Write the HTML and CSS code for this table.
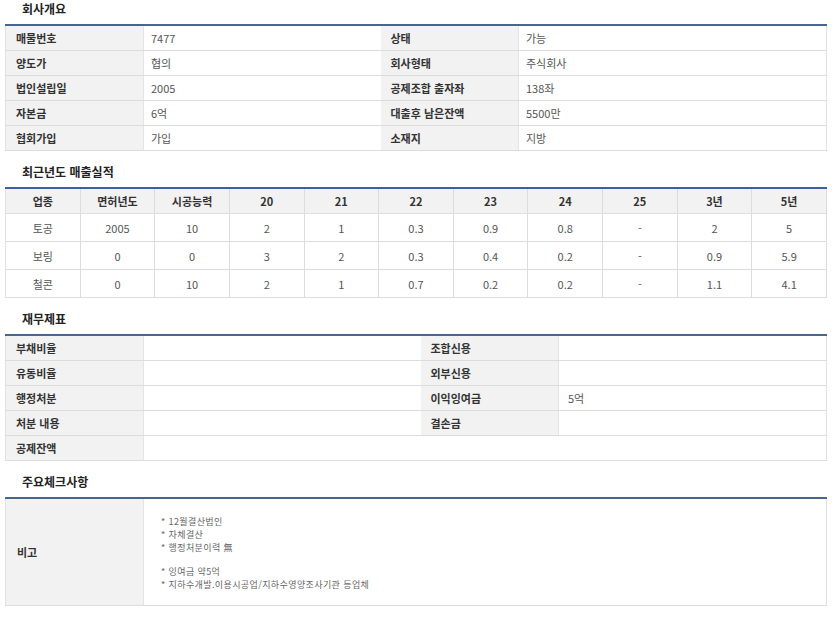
FILE: index.html
```html
<!DOCTYPE html>
<html lang="ko">
<head>
<meta charset="utf-8">
<link rel="stylesheet" href="styles.css">
</head>
<body>
<div class="page">
  <h2 class="title">회사개요</h2>
  <table class="info">
    <colgroup><col class="c-l"><col class="c-v1"><col class="c-l"><col></colgroup>
    <tr><th>매물번호</th><td>7477</td><th>상태</th><td>가능</td></tr>
    <tr><th>양도가</th><td>협의</td><th>회사형태</th><td>주식회사</td></tr>
    <tr><th>법인설립일</th><td>2005</td><th>공제조합 출자좌</th><td>138좌</td></tr>
    <tr><th>자본금</th><td>6억</td><th>대출후 남은잔액</th><td>5500만</td></tr>
    <tr><th>협회가입</th><td>가입</td><th>소재지</th><td>지방</td></tr>
  </table>

  <h2 class="title">최근년도 매출실적</h2>
  <table class="sales">
    <tr><th>업종</th><th>면허년도</th><th>시공능력</th><th>20</th><th>21</th><th>22</th><th>23</th><th>24</th><th>25</th><th>3년</th><th>5년</th></tr>
    <tr><td>토공</td><td>2005</td><td>10</td><td>2</td><td>1</td><td>0.3</td><td>0.9</td><td>0.8</td><td>-</td><td>2</td><td>5</td></tr>
    <tr><td>보링</td><td>0</td><td>0</td><td>3</td><td>2</td><td>0.3</td><td>0.4</td><td>0.2</td><td>-</td><td>0.9</td><td>5.9</td></tr>
    <tr><td>철콘</td><td>0</td><td>10</td><td>2</td><td>1</td><td>0.7</td><td>0.2</td><td>0.2</td><td>-</td><td>1.1</td><td>4.1</td></tr>
  </table>

  <h2 class="title">재무제표</h2>
  <table class="info fin">
    <colgroup><col class="c-l"><col class="c-v2"><col class="c-l"><col></colgroup>
    <tr><th>부채비율</th><td></td><th>조합신용</th><td></td></tr>
    <tr><th>유동비율</th><td></td><th>외부신용</th><td></td></tr>
    <tr><th>행정처분</th><td></td><th>이익잉여금</th><td>5억</td></tr>
    <tr><th>처분 내용</th><td></td><th>결손금</th><td></td></tr>
    <tr><th>공제잔액</th><td colspan="3"></td></tr>
  </table>

  <h2 class="title">주요체크사항</h2>
  <table class="info check">
    <colgroup><col class="c-l"><col></colgroup>
    <tr><th>비고</th><td><div class="notes">
      <p>* 12월결산법인</p>
      <p>* 자체결산</p>
      <p>* 행정처분이력 無</p>
      <p class="blank"></p>
      <p>* 잉여금 약5억</p>
      <p>* 지하수개발.이용시공업/지하수영양조사기관 등업체</p>
    </div></td></tr>
  </table>
</div>
</body>
</html>
```

FILE: styles.css
```css
* { box-sizing: border-box; }
html, body { margin: 0; padding: 0; background: #fff; }
body {
  font-family: "Noto Sans CJK KR", "Noto Sans", sans-serif;
  color: #333;
}
.page {
  width: 822px;
  margin-left: 5px;
}
.title {
  margin: 0 0 6px 17px;
  height: 18px;
  line-height: 18px;
  font-size: 12px;
  font-weight: 700;
  color: #222;
}
table {
  width: 822px;
  border-collapse: collapse;
  table-layout: fixed;
  border-top: 2px solid #46658f;
  border-left: 1px solid #e2e2e2;
  border-right: 1px solid #e2e2e2;
  margin-bottom: 12px;
}
.c-l { width: 138px; }
.c-v1 { width: 237px; }
.c-v2 { width: 277px; }

.info th, .info td {
  height: 25px;
  padding: 0 0 0 10px;
  border-bottom: 1px solid #dcdcdc;
  font-size: 11px;
  text-align: left;
  vertical-align: middle;
}
.info th {
  background: #f2f2f2;
  font-weight: 700;
  color: #333;
  border-right: 1px solid #e4e4e4;
}
.info td {
  padding-left: 7px;
  color: #555;
  background: #fff;
}
.fin td { padding-left: 9px; }

.sales { border-top-color: #3b5f9f; }
.sales th, .sales td {
  text-align: center;
  vertical-align: middle;
  font-size: 11px;
  border-bottom: 1px solid #dcdcdc;
  border-right: 1px solid #dcdcdc;
  padding: 0;
}
.sales th {
  height: 26px;
  background: #f2f2f2;
  font-weight: 700;
  color: #333;
}
.sales td {
  height: 28px;
  color: #555;
}

.check th { padding-left: 11px; }
.check td { padding: 0 0 0 17px; }
.notes {
  padding: 16px 0 14px;
  font-size: 9px;
  letter-spacing: 0.4px;
  color: #666;
}
.notes p {
  margin: 0;
  height: 13px;
  line-height: 13px;
  white-space: nowrap;
}
.notes p.blank { height: 11px; }
```
